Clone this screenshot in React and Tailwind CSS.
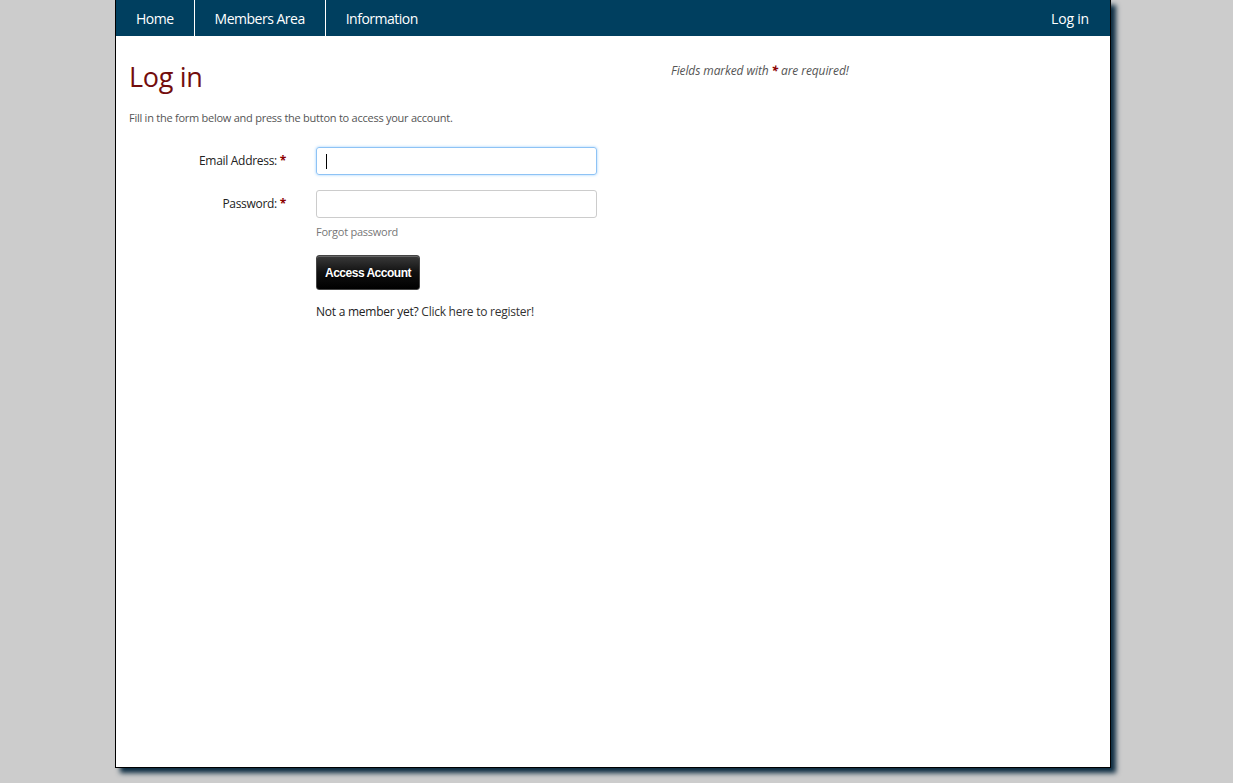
import React from "react";

const NavLink = ({ children, border }) => (
  <a
    href="#"
    className={
      border
        ? "flex h-full items-center border-r border-white px-[20px] text-white"
        : "flex h-full items-center px-[20px] text-white"
    }
  >
    {children}
  </a>
);

const Req = () => <span className="font-bold text-[#8b0000]">*</span>;

export default function App() {
  return (
    <div className="min-h-[783px] w-full bg-[#cccccc] font-['Open_Sans',sans-serif]">
      <div className="ml-[115px] h-[768px] w-[996px] border-x border-b border-black bg-white shadow-[5px_5px_5px_#0b2b40]">
        {/* top nav */}
        <nav className="flex h-[36px] items-center bg-[#003f5f] text-[14px] tracking-[-0.5px]">
          <NavLink border>Home</NavLink>
          <NavLink border>Members Area</NavLink>
          <NavLink>Information</NavLink>
          <div className="flex-1" />
          <a href="#" className="flex h-full items-center pl-[20px] pr-[21px] tracking-[-0.2px] text-white">
            Log in
          </a>
        </nav>

        <div className="flex px-[13px] pt-[22px]">
          <div className="w-[542px]">
            <h1 className="text-[27px] leading-[38px] tracking-[-0.3px] text-[#730d0d]">Log in</h1>
            <p className="mt-[14px] text-[11px] tracking-[-0.25px] text-[#555]">
              Fill in the form below and press the button to access your account.
            </p>

            <div className="mt-[20px] flex flex-col">
              <div className="flex items-center">
                <label className="w-[157px] text-right text-[12px] tracking-[-0.3px] text-[#222]">
                  Email Address: <Req />
                </label>
                <div className="relative ml-[30px]">
                  <input
                    autoFocus
                    className="block h-[28px] w-[281px] rounded-[3px] border border-[#8ec3f5] px-2 text-[13px] shadow-[0_0_3px_#9ccfff] outline-none"
                  />
                  <span className="pointer-events-none absolute left-[10px] top-[7px] h-[15px] w-px bg-black" />
                </div>
              </div>
              <div className="mt-[15px] flex items-center">
                <label className="w-[157px] text-right text-[12px] tracking-[-0.3px] text-[#222]">
                  Password: <Req />
                </label>
                <input
                  type="password"
                  className="ml-[30px] block h-[28px] w-[281px] rounded-[3px] border border-[#cccccc] px-2 text-[13px] outline-none"
                />
              </div>
              <div className="ml-[187px] flex flex-col items-start">
                <a href="#" className="mt-[6px] text-[11px] tracking-[-0.25px] text-[#777]">
                  Forgot password
                </a>
                <button className="mt-[15px] h-[35px] w-[104px] rounded-[3px] border border-[#444] bg-[linear-gradient(#3a3a3a,#111_50%,#000)] font-['Liberation_Sans',sans-serif] text-[12px] font-bold tracking-[-0.5px] text-white shadow-[inset_0_1px_0_#666] [text-shadow:0_1px_2px_#000]">
                  Access Account
                </button>
                <p className="mt-[13px] text-[12px] tracking-[-0.25px] text-[#222]">
                  Not a member yet? <a href="#" className="text-[#333]">Click here to register!</a>
                </p>
              </div>
            </div>
          </div>
          <div className="pt-[4px] text-[12px] italic tracking-[-0.1px] text-[#555]">
            Fields marked with <Req /> are required!
          </div>
        </div>
      </div>
    </div>
  );
}
